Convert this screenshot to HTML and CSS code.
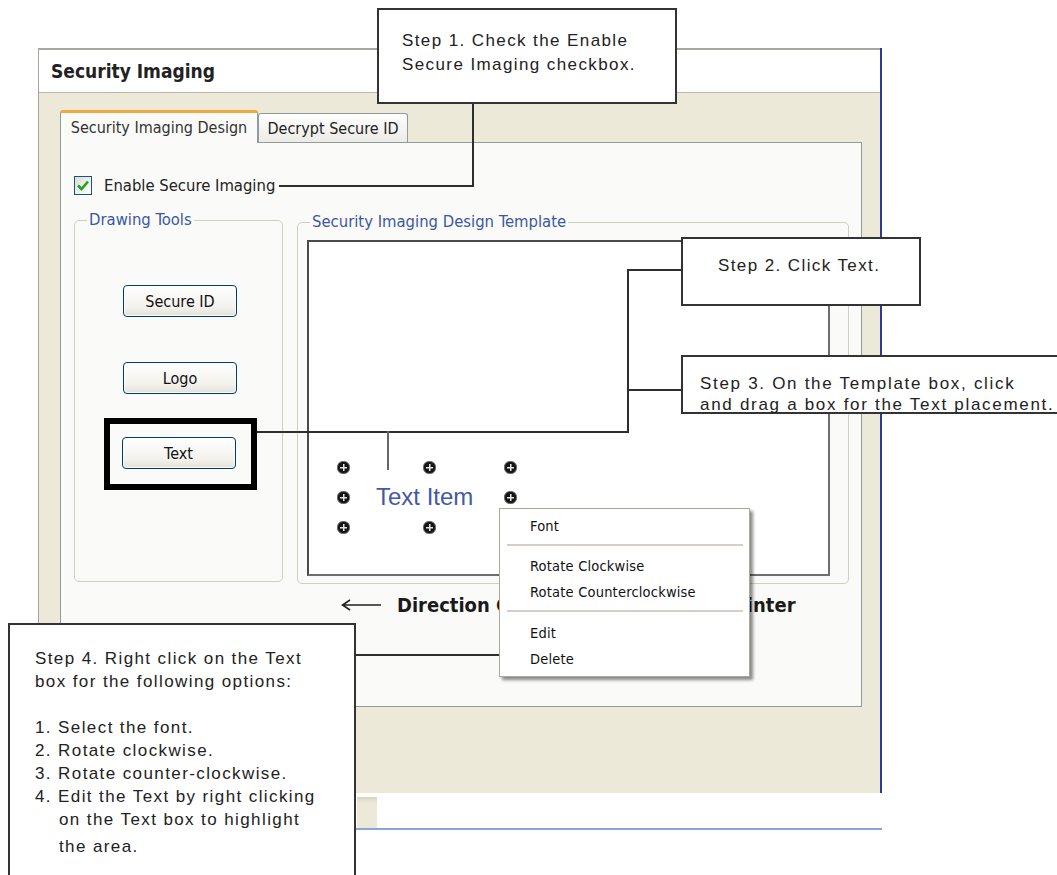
FILE: index.html
```html
<!DOCTYPE html>
<html lang="en">
<head>
    <meta charset="UTF-8">
    <title>Security Imaging</title>
    <link rel="stylesheet" href="styles.css">
</head>
<body>
<div class="stage">
    <div class="window">
        <div class="titlebar">
            <h1>Security Imaging</h1>
        </div>
        <div class="window-body">
            <div class="tabs">
                <div class="tab active">Security Imaging Design</div>
                <div class="tab">Decrypt Secure ID</div>
            </div>
            <div class="panel">
                <label class="check-row">
                    <span class="checkbox">
                        <svg width="18" height="19" viewBox="0 0 18 19"><polyline points="4,9.5 7.5,13 14,5.5" fill="none" stroke="#21a121" stroke-width="2.6"/></svg>
                    </span>
                    Enable Secure Imaging
                </label>
                <div class="groups">
                    <div class="group tools">
                        <span class="group-label">Drawing Tools</span>
                        <button class="xp-btn">Secure ID</button>
                        <button class="xp-btn logo-btn">Logo</button>
                        <div class="highlight">
                            <button class="xp-btn">Text</button>
                        </div>
                    </div>
                    <div class="group template">
                        <span class="group-label">Security Imaging Design Template</span>
                        <div class="canvas">
                            <span class="handle" style="left:28px;top:219px"></span>
                            <span class="handle" style="left:114px;top:219px"></span>
                            <span class="handle" style="left:195px;top:219px"></span>
                            <span class="handle" style="left:28px;top:249px"></span>
                            <span class="handle" style="left:195px;top:249px"></span>
                            <span class="handle" style="left:28px;top:279px"></span>
                            <span class="handle" style="left:114px;top:279px"></span>
                            <span class="handle" style="left:195px;top:279px"></span>
                            <span class="text-item">Text Item</span>
                        </div>
                    </div>
                </div>
                <div class="direction">
                    <svg width="42" height="14" viewBox="0 0 42 14"><path d="M41 7H3M10 2L2.5 7L10 12" fill="none" stroke="#222" stroke-width="1.6"/></svg>
                    <span>Direction Check Is Inserted Into Printer</span>
                </div>
            </div>
        </div>
    </div>
    <div class="statusbar">
        <span class="status-block"></span>
    </div>

    <!-- annotation lines -->
    <div class="line" style="left:472px;top:103px;width:2px;height:84px"></div>
    <div class="line" style="left:279px;top:185px;width:195px;height:2px"></div>
    <div class="line" style="left:627px;top:269px;width:55px;height:2px"></div>
    <div class="line" style="left:627px;top:389px;width:55px;height:2px"></div>
    <div class="line" style="left:627px;top:269px;width:2px;height:164px"></div>
    <div class="line" style="left:257px;top:431px;width:372px;height:2px"></div>
    <div class="line light" style="left:387px;top:431px;width:2px;height:39px"></div>
    <div class="line" style="left:355px;top:654px;width:145px;height:2px"></div>

    <ul class="context-menu">
        <li>Font</li>
        <li class="sep"></li>
        <li>Rotate Clockwise</li>
        <li>Rotate Counterclockwise</li>
        <li class="sep"></li>
        <li>Edit</li>
        <li>Delete</li>
    </ul>

    <div class="callout step1">Step 1. Check the Enable<br>Secure Imaging checkbox.</div>
    <div class="callout step2">Step 2. Click Text.</div>
    <div class="callout step3">Step 3. On the Template box, click<br>and drag a box for the Text placement.</div>
    <div class="callout step4">
        <p>Step 4. Right click on the Text<br>box for the following options:</p>
        <div class="opt">1. Select the font.</div>
        <div class="opt">2. Rotate clockwise.</div>
        <div class="opt">3. Rotate counter-clockwise.</div>
        <div class="opt">4. Edit the Text by right clicking<br>on the Text box to highlight<br><span class="last">the area.</span></div>
    </div>
</div>
</body>
</html>
```

FILE: styles.css
```css
body {
    margin: 0;
    background-color: #fff;
}

.stage {
    position: relative;
    width: 1057px;
    height: 875px;
    overflow: hidden;
    font-family: "DejaVu Sans Condensed", "DejaVu Sans", sans-serif;
    font-stretch: condensed;
    color: #1a1a1a;
}

.window {
    margin: 48px 0 0 38px;
    width: 844px;
    box-sizing: border-box;
    border-left: 1px solid #a6a59b;
    border-right: 2px solid #2b3a9c;
}

.titlebar {
    height: 45px;
    box-sizing: border-box;
    background-color: #fff;
    border-top: 2px solid #a8a79c;
    border-bottom: 1px solid #b9b7ab;
    display: flex;
    align-items: center;
    padding-left: 12px;
}

.titlebar h1 {
    margin: 0;
    font-size: 19px;
    font-weight: bold;
    color: #222;
}

.window-body {
    height: 700px;
    box-sizing: border-box;
    background-color: #ece9d8;
    padding: 17px 18px 0 21px;
}

.tabs {
    display: flex;
    align-items: flex-end;
    height: 32px;
}

.tab {
    box-sizing: border-box;
    font-size: 16px;
    border: 1px solid #919b9c;
    border-bottom: none;
    border-radius: 3px 3px 0 0;
    display: flex;
    align-items: center;
    justify-content: center;
}

.tab.active {
    position: relative;
    z-index: 1;
    width: 198px;
    height: 33px;
    margin-bottom: -1px;
    padding-bottom: 2px;
    background-color: #fafaf8;
    border-top: 3px solid #f2a83c;
    color: #333;
}

.tab:not(.active) {
    width: 150px;
    height: 29px;
    background: linear-gradient(#fefefe, #ecebe6);
    color: #222;
}

.panel {
    height: 565px;
    box-sizing: border-box;
    background-color: #fafaf8;
    border: 1px solid #919b9c;
    padding: 32px 0 0 13px;
}

.check-row {
    display: flex;
    align-items: center;
    gap: 12px;
    height: 20px;
    font-size: 16.5px;
    color: #222;
}

.checkbox {
    width: 18px;
    height: 19px;
    box-sizing: border-box;
    border: 1px solid #1c5180;
    background: linear-gradient(135deg, #dcdcd5, #fff);
    display: flex;
}

.checkbox svg {
    margin: -1px;
}

.groups {
    display: flex;
    align-items: flex-start;
    gap: 14px;
    margin-top: 25px;
}

.group {
    position: relative;
    box-sizing: border-box;
    height: 362px;
    border: 1px solid #d0d0bf;
    border-radius: 5px;
}

.group-label {
    position: absolute;
    top: -11px;
    left: 12px;
    padding: 0 2px;
    background-color: #fafaf8;
    font-size: 16.5px;
    line-height: 20px;
    color: #3a57a4;
}

.tools {
    width: 209px;
    display: flex;
    flex-direction: column;
    align-items: center;
    padding: 64px 0 0 3px;
}

.xp-btn {
    width: 114px;
    height: 32px;
    font-family: inherit;
    font-stretch: condensed;
    font-size: 16px;
    color: #111;
    border: 1px solid #003c74;
    border-radius: 4px;
    background: linear-gradient(#fff, #f3f2ed 70%, #e3e1d6);
    box-shadow: inset 0 0 0 1px rgba(255, 255, 255, 0.8);
    padding: 0;
}

.logo-btn {
    margin-top: 45px;
}

.highlight {
    margin-top: 24px;
    border: 6px solid #000;
    padding: 13px 15px 15px 12px;
}

.template {
    width: 552px;
    margin-top: 2px;
    padding: 17px 18px 7px 9px;
}

.canvas {
    position: relative;
    height: 100%;
    box-sizing: border-box;
    background-color: #fff;
    border: 2px solid #4a4a4a;
    border-right-color: #6e6e6e;
    border-bottom-color: #6e6e6e;
}

.handle {
    position: absolute;
    width: 11px;
    height: 11px;
    border-radius: 45%;
    background:
        linear-gradient(#e4e4e4, #e4e4e4) center / 7px 1.5px no-repeat,
        linear-gradient(#e4e4e4, #e4e4e4) center / 1.5px 7px no-repeat,
        #151515;
    border: 1px solid #6a6a6a;
}

.text-item {
    position: absolute;
    left: 67px;
    top: 240px;
    font-family: "Liberation Sans", Arial, sans-serif;
    font-stretch: normal;
    font-size: 24px;
    line-height: 30px;
    color: #4457a8;
}

.direction {
    display: flex;
    align-items: center;
    gap: 15px;
    margin: 9px 0 0 266px;
    height: 24px;
    font-size: 20px;
    font-weight: bold;
    color: #1a1a1a;
    white-space: nowrap;
}

.statusbar {
    position: relative;
    margin-left: 38px;
    width: 844px;
    height: 37px;
    box-sizing: border-box;
    background-color: #fff;
    border-bottom: 2px solid #8ca2dc;
}

.status-block {
    position: absolute;
    left: 319px;
    top: 4px;
    width: 20px;
    height: 31px;
    background: linear-gradient(#d8d4c2, #ece9d8 20%);
}

.line {
    position: absolute;
    z-index: 3;
    background-color: #2e2e2e;
}

.line.light {
    background-color: #666;
}

.context-menu {
    position: absolute;
    z-index: 4;
    left: 499px;
    top: 508px;
    width: 251px;
    height: 169px;
    box-sizing: border-box;
    margin: 0;
    padding: 4px 0;
    list-style: none;
    background-color: #fff;
    border: 1px solid #aca899;
    box-shadow: 3px 3px 3px rgba(0, 0, 0, 0.45);
    font-size: 14.5px;
    letter-spacing: 0.2px;
    color: #111;
}

.context-menu li {
    height: 26px;
    line-height: 26px;
    padding-left: 30px;
}

.context-menu li.sep {
    height: 2px;
    margin: 5px 6px 7px 7px;
    padding: 0;
    background-color: #d4d0c8;
}

.context-menu li.sep + li + li + li.sep {
    margin-bottom: 8px;
}

.callout {
    position: absolute;
    z-index: 5;
    box-sizing: border-box;
    background-color: #fff;
    border: 2px solid #333;
    font-family: "Liberation Sans", Arial, sans-serif;
    font-stretch: normal;
    font-size: 17px;
    letter-spacing: 1.4px;
    color: #222;
}

.step1 {
    left: 377px;
    top: 8px;
    width: 300px;
    height: 96px;
    padding: 19px 0 0 23px;
    line-height: 24px;
}

.step2 {
    left: 681px;
    top: 237px;
    width: 240px;
    height: 69px;
    padding: 15px 0 0 35px;
    line-height: 24px;
}

.step3 {
    left: 681px;
    top: 355px;
    width: 400px;
    height: 59px;
    padding: 16px 0 0 17px;
    line-height: 21px;
    letter-spacing: 1.7px;
    white-space: nowrap;
}

.step4 {
    left: 8px;
    top: 623px;
    width: 348px;
    height: 300px;
    padding: 22px 0 0 25px;
    line-height: 23px;
}

.step4 p {
    margin: 0 0 23px;
}

.step4 .opt {
    padding-left: 24px;
    text-indent: -24px;
}

.step4 .last {
    display: inline-block;
    margin-top: 4px;
    text-indent: 0;
}
```
